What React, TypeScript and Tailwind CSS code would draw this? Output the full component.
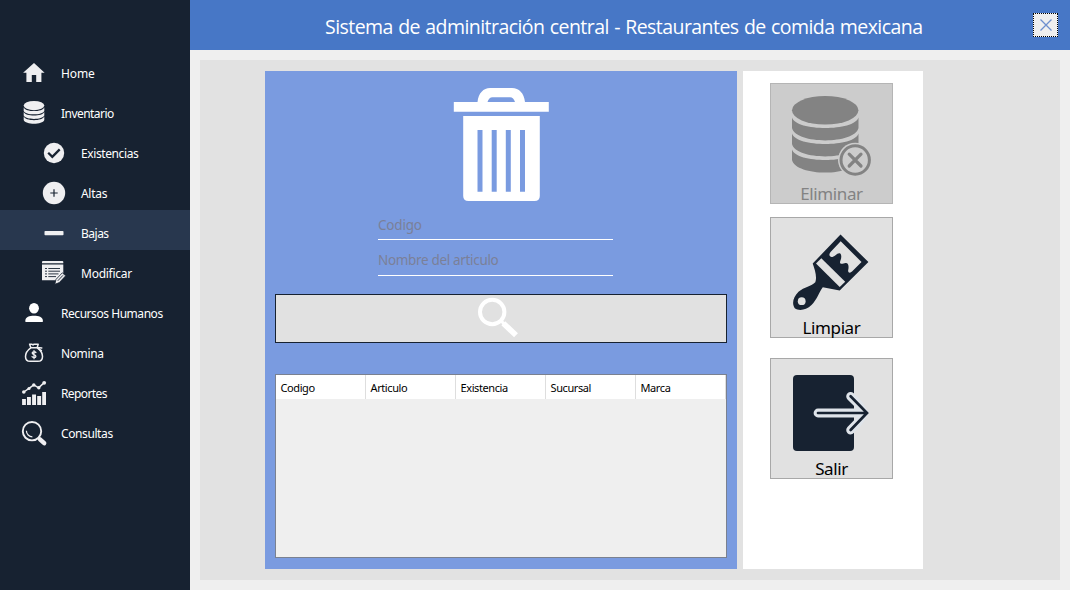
import type { ReactNode } from "react";

const light = "#efeff1";
const navy = "#172231";

const HomeIcon = () => (
  <path d="M15 5 25.6 14.8H22.4V24H17.2V17H12.8V24H7.4V14.8H4.1Z" fill={light} />
);

const DatabaseIcon = () => (
  <g fill={light}>
    <ellipse cx="15" cy="7.6" rx="10.3" ry="4.6" />
    <path d="M4.7 9.4C6.5 14.2 23.5 14.2 25.3 9.4V12.9C23.5 17.4 6.5 17.4 4.7 12.9Z" />
    <path d="M4.7 14C6.5 18.8 23.5 18.8 25.3 14V17.5C23.5 22 6.5 22 4.7 17.5Z" />
    <path d="M4.7 18.6C6.5 23.4 23.5 23.4 25.3 18.6V22C23.5 27 6.5 27 4.7 22Z" />
  </g>
);

const CheckIcon = () => (
  <>
    <circle cx="15" cy="15" r="10.2" fill={light} />
    <path d="M9.2 14.8 13.3 18.8 20.7 11.4" fill="none" stroke={navy} strokeWidth="2.3" />
  </>
);

const PlusIcon = () => (
  <>
    <circle cx="15" cy="15" r="11.2" fill={light} />
    <path d="M11.3 15H18.7M15 11.3V18.7" stroke={navy} strokeWidth="1.2" />
  </>
);

const MinusIcon = () => <rect x="5.5" y="13" width="19" height="4.2" rx="0.8" fill={light} />;

const EditIcon = () => (
  <>
    <path d="M4 3H23.3Q24.3 3 24.3 4V5.3H3V4Q3 3 4 3Z" fill={light} />
    <path d="M3 6.4H24.3V15L16.8 22.2H3Z" fill={light} />
    <path d="M6 10.5H8M9.3 10.5H21M6 13.2H8M9.3 13.2H21M6 15.9H8M9.3 15.9H19.5M6 18.6H8M9.3 18.6H17" stroke={navy} strokeWidth="0.9" />
    <path d="M15.8 26.3 17 21.4 23.3 14.8 26.7 17.8 20.3 24.6Z" fill={light} stroke={navy} strokeWidth="0.8" />
    <path d="M18.8 22.8 24 17.3" stroke={navy} strokeWidth="0.9" />
  </>
);

const PersonIcon = () => (
  <g fill="#fff">
    <ellipse cx="15" cy="10.3" rx="4.9" ry="5.3" />
    <path d="M6.4 24V22.3C6.4 19.2 10.4 17.8 15 17.8S23.8 19.2 23.8 22.3V24Z" />
  </g>
);

const MoneyBagIcon = () => (
  <g fill="none" stroke={light} strokeWidth="1.5" strokeLinejoin="round" strokeLinecap="round">
    <path d="M11.8 9.8H18.2C21.5 12.2 23.5 15.2 23.5 18.4C23.5 21.8 21.6 23.3 18.8 23.3H11.2C8.4 23.3 6.5 21.8 6.5 18.4C6.5 15.2 8.5 12.2 11.8 9.8Z" />
    <path d="M11.8 9.5 10.6 6.2H12.8L14 7L15 6.2H19.2L18.2 9.5M18.6 9.4 22.8 9.9M20 11 22.4 12.6" />
    <path d="M16.9 14.5C16 13.4 13.2 13.5 13.2 15.1C13.2 16.9 16.9 16.2 16.9 18.2C16.9 19.9 14 20 13 18.7M15 12.6V20.7" strokeWidth="1.3" />
  </g>
);

const ChartIcon = () => (
  <>
    <path d="M3.1 21H6.9V27H3.1ZM8 19H11.9V27H8ZM13.1 16.6H17V27H13.1ZM18.2 18H22.1V27H18.2ZM23.2 14H27V27H23.2Z" fill={light} />
    <path d="M4.8 14 10 10.3 14.8 6.8 19.6 9.8 25.2 4.6" fill="none" stroke={light} strokeWidth="1.5" />
    <g fill={light}>
      <circle cx="4.8" cy="14" r="1.8" />
      <circle cx="10" cy="10.5" r="1.6" />
      <circle cx="14.8" cy="7" r="1.7" />
      <circle cx="19.8" cy="9.8" r="1.7" />
      <circle cx="25.2" cy="4.8" r="1.9" />
    </g>
  </>
);

const LensIcon = () => (
  <g fill="none" stroke={light}>
    <circle cx="13" cy="13.2" r="9.2" strokeWidth="1.9" />
    <path d="M7.4 12.8A6 6 0 0 0 13.4 18.8" strokeWidth="1.2" />
    <path d="M19.3 19.6 21.5 21.8" strokeWidth="2" />
    <path d="M21 21.4 25.2 25.2" strokeWidth="4.4" strokeLinecap="round" />
  </g>
);

type Item = { label: string; icon: ReactNode; sub?: boolean; active?: boolean; tracking: string };

const items: Item[] = [
  { label: "Home", icon: <HomeIcon />, tracking: "tracking-[-0.1px]" },
  { label: "Inventario", icon: <DatabaseIcon />, tracking: "tracking-[-0.55px]" },
  { label: "Existencias", icon: <CheckIcon />, sub: true, tracking: "tracking-[-0.4px]" },
  { label: "Altas", icon: <PlusIcon />, sub: true, tracking: "tracking-[-0.3px]" },
  { label: "Bajas", icon: <MinusIcon />, sub: true, active: true, tracking: "tracking-[-0.5px]" },
  { label: "Modificar", icon: <EditIcon />, sub: true, tracking: "tracking-[-0.25px]" },
  { label: "Recursos Humanos", icon: <PersonIcon />, tracking: "tracking-[-0.45px]" },
  { label: "Nomina", icon: <MoneyBagIcon />, tracking: "tracking-[-0.38px]" },
  { label: "Reportes", icon: <ChartIcon />, tracking: "tracking-[-0.6px]" },
  { label: "Consultas", icon: <LensIcon />, tracking: "tracking-[-0.4px]" },
];

function Sidebar() {
  return (
    <nav className="w-[190px] shrink-0 bg-[#172231] pt-[50px] text-[12px] text-white">
      {items.map((it) => (
        <a
          key={it.label}
          className={`flex h-10 items-center pt-[6px] ${it.sub ? "pl-[39px]" : "pl-[19px]"} ${it.active ? "bg-[#28374e]" : ""}`}
        >
          <svg viewBox="0 0 30 30" className="size-[30px] shrink-0">{it.icon}</svg>
          <span className={`ml-3 whitespace-nowrap pt-[2px] ${it.tracking}`}>{it.label}</span>
        </a>
      ))}
    </nav>
  );
}

const TrashIcon = () => (
  <svg viewBox="453 88 96 113" className="h-[113px] w-24" fill="#fff">
    <path fillRule="evenodd" d="M453.8 102H477.5C478.5 93 483.5 88 490 88H512C519 88 524 93 525 102H548.8V111.8H453.8ZM487.5 102H515C514 99 512.5 97.3 510 97.3H492.5C490 97.3 488.5 99 487.5 102Z" />
    <path fillRule="evenodd" d="M463.2 116H539.8V196Q539.8 201 534.5 201H468.5Q463.2 201 463.2 196ZM477.5 130V191.8H482.5V130ZM491.7 130V191.8H496.7V130ZM505.8 130V191.8H510.8V130ZM520 130V191.8H525V130Z" />
  </svg>
);

const columns = ["Codigo", "Articulo", "Existencia", "Sucursal", "Marca"];

function Form() {
  return (
    <section className="flex h-[498px] w-[472px] flex-col bg-[#7a9be0] px-[10px] pt-[17px]">
      <div className="pl-[178px]"><TrashIcon /></div>
      <div className="ml-[103px] w-[235px]">
        <input
          placeholder="Codigo"
          className="block h-[39px] w-full border-b border-white bg-transparent pt-[9px] text-[13.5px] tracking-[-0.2px] outline-none placeholder:text-[#7a8098]"
        />
        <input
          placeholder="Nombre del articulo"
          className="block h-[36px] w-full border-b border-white bg-transparent pt-[4px] text-[13.5px] tracking-[-0.33px] outline-none placeholder:text-[#7a8098]"
        />
      </div>
      <button className="mt-[18px] flex h-[49px] w-full shrink-0 border border-[#172231] bg-[#e1e1e1] pl-[201px] pt-[2px]">
        <svg viewBox="477 297 42 41" className="h-[41px] w-[42px]" fill="none" stroke="#fff">
          <circle cx="492.2" cy="312" r="12.2" strokeWidth="4" />
          <path d="M500.8 320.6 505 324.8" strokeWidth="3" />
          <path d="M503.3 323.2 516 335.3" strokeWidth="5.6" />
        </svg>
      </button>
      <div className="mt-[31px] h-[184px] shrink-0 border border-[#7a8190] bg-[#efefef]">
        <div className="flex h-6 bg-white text-[11px] text-black">
          {columns.map((c, i) => (
            <div
              key={c}
              className={`flex items-center border-r border-[#dedede] pt-[2px] tracking-[-0.4px] ${i === 0 ? "w-[89.5px] pl-[4.5px]" : "w-[90px] pl-[5px]"}`}
            >
              {c}
            </div>
          ))}
        </div>
      </div>
    </section>
  );
}

const EliminarIcon = () => (
  <g fill="#838383">
    <ellipse cx="825.2" cy="110.3" rx="33.2" ry="14.3" />
    <path d="M792 117.5C796 131.5 854.5 131.5 858.5 117.5V128C854.5 144.5 796 144.5 792 128Z" />
    <path d="M792 133.5C796 147.5 854.5 147.5 858.5 133.5V144C854.5 160.5 796 160.5 792 144Z" />
    <path d="M792 149.5C796 163.5 854.5 163.5 858.5 149.5V160C854.5 176.8 796 176.8 792 160Z" />
    <circle cx="855.2" cy="160" r="17.2" fill="#ccc" />
    <circle cx="855.2" cy="160" r="14.2" fill="#ccc" stroke="#838383" strokeWidth="3" />
    <path d="M849.2 154.2 861 166M861 154.2 849.2 166" stroke="#838383" strokeWidth="3.2" strokeLinecap="round" />
  </g>
);

const LimpiarIcon = () => (
  <>
    <path fill={navy} d="M840.5 234.6 868.4 262 839.7 290.6 822.8 287.2C819.5 291.5 817 299.5 811.5 305C805.8 310.6 798.5 311 794.8 308.2C791.5 303.5 793.2 297 798.5 291.8C804 286.8 811.8 286.2 815.3 282.2C817.3 277 814.8 269.5 812.7 263.5Z" />
    <path fill="#e1e1e1" d="M840.7 241.2 861.5 262 852 271.6C850 273.6 847.6 272.6 848.2 270C849 266.5 848.6 262.6 845.5 263C843.5 263.4 840.2 264.8 840 262.6C840 260.5 842 258.5 841 254.8C840 252.2 837.5 253.6 835.5 255.2C832.5 257.8 829.6 257.4 829.4 254.8C829.4 253.6 830 252.8 830.8 251.8Z" />
    <path fill="#e1e1e1" d="M821.3 258.2 845.2 281.7 839.7 287 816 263.5Z" />
    <circle cx="801.7" cy="301.2" r="3.9" fill="#e1e1e1" />
  </>
);

const SalirIcon = () => (
  <>
    <rect x="793" y="375" width="61" height="76" rx="4" fill={navy} />
    <g fill="none" strokeLinecap="round">
      <path d="M818 413H864M850.6 396.3 867.2 413 850.6 430" stroke="#dfe4ea" strokeWidth="8.8" strokeLinejoin="miter" clipPath="url(#arrow-edge)" />
      <path d="M818 413H866M850.6 396.3 867 413 850.6 430" stroke={navy} strokeWidth="2.7" />
    </g>
    <clipPath id="arrow-edge"><path d="M810 388H854L869 413 854 438H810Z" /></clipPath>
  </>
);

function ActionButton({ label, box, disabled, className, children }: {
  label: string; box: string; disabled?: boolean; className: string; children: ReactNode;
}) {
  return (
    <button
      disabled={disabled}
      className={`flex h-[121px] w-[123px] flex-col items-center border ${disabled ? "border-[#b5b5b5] bg-[#ccc] text-[#838383]" : "border-[#a8a8a8] bg-[#e1e1e1] text-black"} ${className}`}
    >
      <svg viewBox={box} className="h-[98px] w-[121px] shrink-0">{children}</svg>
      <span className="block h-[21px] text-[17px] leading-[24px] tracking-[-0.4px]">{label}</span>
    </button>
  );
}

export default function App() {
  return (
    <div className="flex h-[590px] w-[1070px] overflow-hidden font-['Noto_Sans','Open_Sans',sans-serif]">
      <Sidebar />
      <div className="flex flex-1 flex-col bg-[#efefef]">
        <header className="flex h-[50px] shrink-0 items-center justify-between bg-[#4777c6] pl-[135px] pr-3 text-white">
          <h1 className="whitespace-nowrap pt-[3px] font-['Open_Sans',sans-serif] text-[19.5px] tracking-[-0.55px] [word-spacing:0.8px]">
            Sistema de adminitración central - Restaurantes de comida mexicana
          </h1>
          <button className="flex h-6 w-[25px] items-center justify-center border border-dotted border-black bg-[#efefef]">
            <svg viewBox="0 0 12 12" className="size-3" stroke="#6d8fce" strokeWidth="1.3">
              <path d="M0.5 0.5 11.5 11.5M11.5 0.5 0.5 11.5" />
            </svg>
          </button>
        </header>
        <main className="m-[10px] flex flex-1 gap-[6px] bg-[#e2e2e2] pl-[65px] pt-[11px]">
          <Form />
          <aside className="h-[498px] w-[180px] bg-white pl-[27px] pt-3">
            <ActionButton label="Eliminar" box="771 84 121 98" disabled className="">
              <EliminarIcon />
            </ActionButton>
            <ActionButton label="Limpiar" box="771 218 121 98" className="mt-[13px]">
              <LimpiarIcon />
            </ActionButton>
            <ActionButton label="Salir" box="771 359 121 98" className="mt-5">
              <SalirIcon />
            </ActionButton>
          </aside>
        </main>
      </div>
    </div>
  );
}
